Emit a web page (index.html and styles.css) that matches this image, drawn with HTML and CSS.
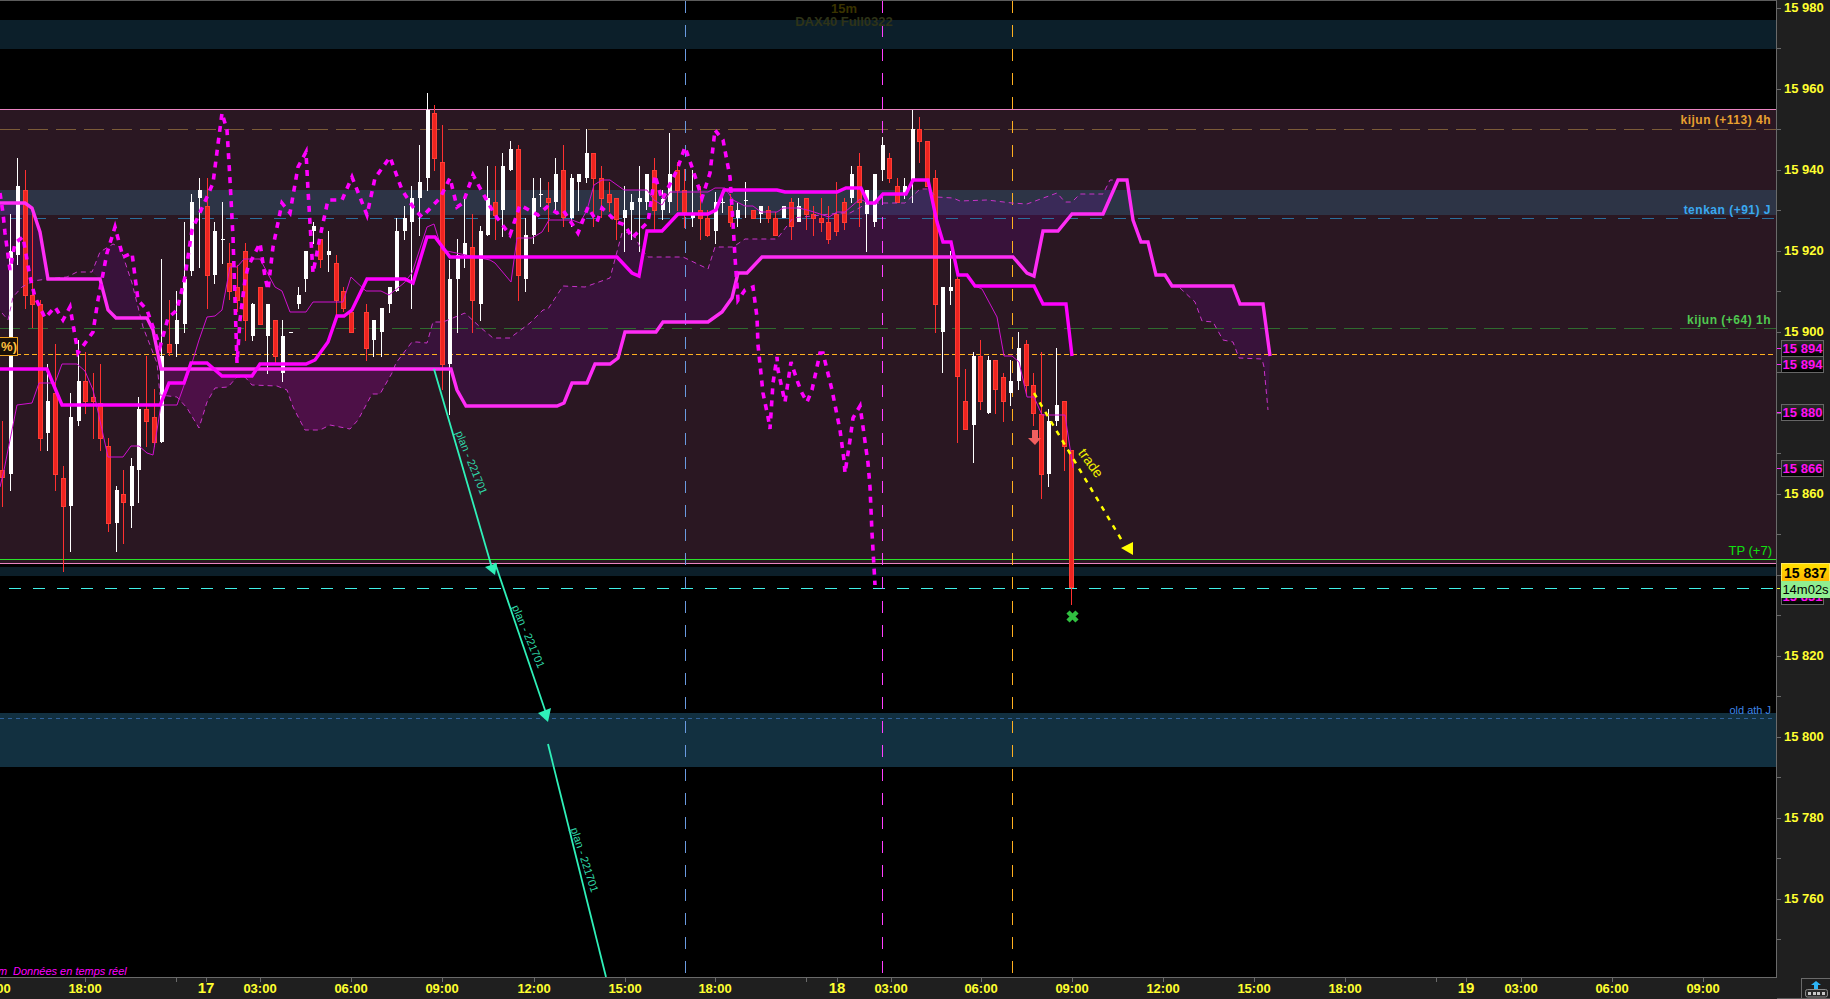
FILE: index.html
```html
<!DOCTYPE html>
<html lang="en">
<head>
    <meta charset="UTF-8">
    <title>DAX40 Full0322 15m</title>
    <link rel="stylesheet" href="styles.css">
</head>
<body>
<div class="terminal">

    <!-- Main chart -->
    <div class="chart">
        <svg class="chart-svg" width="1776" height="976" viewBox="0 1 1776 976">
            <!-- zones -->
            <rect class="zone zone-teal" x="0" y="20" width="1776" height="29"/>
            <rect class="zone zone-plum" x="0" y="109" width="1776" height="455"/>
            <rect class="zone zone-band" x="0" y="190" width="1776" height="25"/>
            <rect class="zone zone-teal" x="0" y="567" width="1776" height="9"/>
            <rect class="zone zone-blue" x="0" y="713" width="1776" height="54"/>

            <!-- kumo -->
            <polygon class="kumo" points="0,203 25,203 32,208 40,232 48,279 33,281 22,287 13,297 8,320 2,313 0,310"/>
            <polygon class="kumo" points="92,272 100,252 113,244 120,247 132,283 143,327 147,318 116,318 108,310 100,279"/>
            <polygon class="kumo-dark" points="161,369 394,369 392,373 380,394 372,394 358,420 350,429 330,425 320,430 305,430 293,407 287,390 277,386 252,385 245,377 237,377 228,387 215,388 207,402 199,428 187,408 177,397 160,395"/>
            <polygon class="kumo" points="394,369 396,363 412,342 417,342 427,343 433,322 443,322 465,313 480,327 493,338 510,338 530,323 543,310 548,309 563,286 585,287 610,278 622,233 633,232 640,247 648,257 683,257 708,269 715,247 733,247 745,239 777,239 793,218 840,213 850,213 868,203 905,203 920,189 928,189 937,197 953,198 960,201 987,200 1012,203 1027,204 1057,193 1065,202 1072,202 1080,194 1103,194 1110,180 1118,180 1103,214 1072,214 1058,231 1043,231 1034,276 1027,273 1013,257 762,257 747,273 738,273 732,298 722,312 708,322 663,322 656,332 625,332 618,358 610,364 595,364 587,383 572,383 564,403 557,406 466,406 457,390 451,369"/>
            <polygon class="kumo" points="1172,286 1233,286 1240,304 1263,304 1270,356 1268,410 1264,367 1262,359 1239,358 1233,342 1223,340 1213,322 1202,321 1195,302 1180,288"/>

            <!-- horizontal levels -->
            <line class="level level-top" x1="0" y1="109.5" x2="1776" y2="109.5"/>
            <line class="level level-kijun4h" x1="0" y1="129.5" x2="1776" y2="129.5"/>
            <line class="level level-tenkan" x1="10" y1="218.5" x2="1776" y2="218.5"/>
            <line class="level level-kijun1h" x1="0" y1="328.5" x2="1776" y2="328.5"/>
            <line class="level level-last" x1="0" y1="354.5" x2="1776" y2="354.5"/>
            <line class="level level-tp" x1="0" y1="559.5" x2="1776" y2="559.5"/>
            <line class="level level-top" x1="0" y1="563.5" x2="1776" y2="563.5"/>
            <line class="level level-cyan" x1="9" y1="588.5" x2="1776" y2="588.5"/>
            <line class="level level-ath" x1="0" y1="718.5" x2="1776" y2="718.5"/>

            <!-- session separators -->
            <line class="vline vline-blue" x1="685.5" y1="1" x2="685.5" y2="977"/>
            <line class="vline vline-magenta" x1="882.5" y1="1" x2="882.5" y2="977"/>
            <line class="vline vline-orange" x1="1012.5" y1="1" x2="1012.5" y2="977"/>

            <!-- symbol -->
            <text class="chart-title title-tf" x="844" y="13">15m</text>
            <text class="chart-title title-sym" x="844" y="26">DAX40 Full0322</text>

            <!-- candles filled by chart.js -->
            <g id="candles"></g>

            <!-- ichimoku -->
            <polyline class="thin" points="0,487 4,470 17,405 32,403 39,383 55,383 62,364 77,364 85,371 93,390 97,407 108,457 123,457 131,446 139,446 147,453 153,455 161,405 177,405 192,363 199,340 207,317 215,316 222,310 230,267 237,267 244,259 260,259 275,287 282,291 290,312 306,312 313,302 343,302 351,277 366,291 381,291 389,295 404,283 412,273 427,227 434,224 442,250 490,260 495,263 511,282 517,238 532,238 542,232 549,220 572,220 580,223 587,210 594,185 602,180 610,180 624,190 647,190 654,200 662,205 670,192 708,192 715,188 725,188 733,200 745,206 753,206 761,212 777,212 783,208 799,208 807,210 814,212 829,217 837,212 845,212 860,199 868,203 875,203 883,194 906,194 913,180 928,180 937,222 943,242 951,242 958,275 967,275 975,286 982,289 997,317 1004,356 1012,356 1019,362 1027,397 1034,397 1042,415 1065,415 1073,468"/>
            <polyline class="span" points="2,313 8,320 13,297 22,287 33,281 47,279 67,277 77,272 92,272 100,252 113,244 120,247 132,283 143,327 157,363 160,395 177,397 187,408 199,428 207,402 215,388 228,387 237,377 245,377 252,385 277,386 287,390 293,407 305,430 320,430 330,425 350,429 358,420 372,394 380,394 392,373 396,363 412,342 417,342 427,343 433,322 443,322 465,313 480,327 493,338 510,338 530,323 543,310 548,309 563,286 585,287 610,278 622,233 633,232 640,247 648,257 683,257 708,269 715,247 733,247 745,239 777,239 793,218 840,213 850,213 868,203 905,203 920,189 928,189 937,197 953,198 960,201 987,200 1012,203 1027,204 1057,193 1065,202 1072,202 1080,194 1103,194 1110,180 1118,180"/>
            <polyline class="span" points="1180,288 1195,302 1202,321 1213,322 1223,340 1233,342 1239,358 1262,359 1264,367 1268,410"/>
            <polyline class="thick thick-b" points="0,203 25,203 32,208 40,232 48,279 100,279 108,310 116,318 147,318 153,330 161,369 451,369 457,390 466,406 557,406 564,403 572,383 587,383 595,364 610,364 618,358 625,332 656,332 663,322 708,322 722,312 732,298 738,273 747,273 762,257 1013,257 1027,273 1034,276 1043,231 1058,231 1072,214 1103,214 1118,180 1127,180 1133,220 1141,242 1148,242 1156,275 1165,275 1172,286 1233,286 1240,304 1263,304 1270,356"/>
            <polyline class="thick" points="0,369 47,369 62,405 160,405 161,403 169,383 184,383 191,363 207,363 222,376 252,376 260,364 306,364 315,360 328,342 337,316 344,316 352,310 367,279 405,279 413,283 427,237 435,237 450,257 617,257 632,273 639,276 647,231 662,231 678,214 708,214 716,210 724,190 777,190 785,192 837,192 846,188 861,188 868,203 875,203 883,194 906,194 913,180 928,180 937,222 943,242 951,242 958,275 967,275 975,286 1034,286 1043,304 1066,304 1072,356"/>
            <polyline class="chikou" points="0,193 3,213 5,233 10,270 15,243 23,237 30,277 35,297 45,318 55,307 63,320 70,307 78,353 93,332 98,300 107,253 115,227 123,257 132,253 138,300 147,310 160,347 168,318 177,310 185,277 192,230 207,197 213,183 222,113 227,130 230,180 233,237 237,363 240,320 245,280 248,267 260,243 265,277 268,290 273,247 282,203 290,213 298,167 306,152 308,190 313,273 320,237 328,200 342,200 352,177 367,215 375,178 390,157 402,190 415,210 422,217 440,198 450,178 457,207 463,203 473,175 480,188 495,215 510,235 520,205 538,215 547,207 557,213 563,210 578,233 588,207 597,222 602,208 617,222 625,225 632,238 648,222 655,175 662,200 677,170 685,147 693,170 702,198 710,173 715,130 723,140 730,177 733,223 735,257 738,300 745,290 753,287 757,317 758,345 763,393 768,417 770,429 773,383 777,357 778,370 783,393 785,402 791,362 798,383 802,393 807,402 812,390 820,353 823,353 832,390 840,430 844,460 845,473 850,440 853,418 860,406 863,427 868,463 870,487 872,533 874,567 875,585"/>

            <!-- plan arrows -->
            <line class="plan" x1="434" y1="369" x2="492" y2="568"/>
            <polygon class="plan-head" points="485,567 497,563 495,575"/>
            <line class="plan" x1="495" y1="563" x2="547" y2="716"/>
            <polygon class="plan-head" points="538,713 551,708 548,722"/>
            <line class="plan" x1="548" y1="744" x2="606" y2="977"/>
            <text class="plan-label" x="468" y="464" transform="rotate(68 468 464)">plan - 221701</text>
            <text class="plan-label" x="525" y="638" transform="rotate(67 525 638)">plan - 221701</text>
            <text class="plan-label" x="581" y="861" transform="rotate(72 581 861)">plan - 221701</text>

            <!-- trade -->
            <line class="trade" x1="1034" y1="393" x2="1124" y2="544"/>
            <polygon class="trade-head" points="1121,548 1133,542 1133,555"/>
            <text class="trade-label" x="1087" y="466" transform="rotate(54 1087 466)">trade</text>
            <path class="sell-mark" d="M1032 430h6v8h3l-6 7-7-7h4z"/>
            <path class="stop-mark" d="M1068 612l9 9M1077 612l-9 9"/>

            <!-- level names -->
            <text class="tag tag-kijun4h" x="1771" y="124">kijun (+113) 4h</text>
            <text class="tag tag-tenkan" x="1771" y="214">tenkan (+91) J</text>
            <text class="tag tag-kijun1h" x="1771" y="324">kijun (+64) 1h</text>
            <text class="tag tag-tp" x="1772" y="555">TP (+7)</text>
            <text class="tag tag-ath" x="1771" y="714">old ath J</text>
            <text class="status" x="13" y="975">Données en temps réel</text>
            <text class="status status-cut" x="-2" y="975">m</text>
        </svg>

        <!-- badge cut off by left edge -->
        <div class="pct-badge">%)</div>
    </div>

    <!-- Price axis -->
    <div class="price-axis">
        <div class="price-row">15 980</div>
        <div class="price-row">15 960</div>
        <div class="price-row">15 940</div>
        <div class="price-row">15 920</div>
        <div class="price-row">15 900</div>
        <div class="price-row">15 880</div>
        <div class="price-row">15 860</div>
        <div class="price-row">15 840</div>
        <div class="price-row">15 820</div>
        <div class="price-row">15 800</div>
        <div class="price-row">15 780</div>
        <div class="price-row">15 760</div>

        <div class="flag flag-a">15 894</div>
        <div class="flag flag-b">15 894</div>
        <div class="flag flag-c">15 880</div>
        <div class="flag flag-d">15 866</div>
        <div class="flag flag-e">15 831</div>
        <div class="flag-bid">15 837</div>
        <div class="flag-timer">14m02s</div>
    </div>

    <!-- Time axis -->
    <svg class="time-axis" id="time-axis" width="1777" height="21"></svg>

    <div class="corner-wrap">
        <div class="corner">
            <svg width="26" height="19" viewBox="0 0 26 19">
                <path class="corner-arrow" d="M14 2l5 4h-3v4h-4V6H9z"/>
                <rect class="corner-kbd" x="3.5" y="10.5" width="22" height="7.5" rx="2"/>
                <rect class="corner-key" x="6" y="13" width="3" height="3"/>
                <rect class="corner-key" x="11" y="13" width="3" height="3"/>
                <rect class="corner-key" x="15" y="13" width="3" height="3"/>
                <rect class="corner-key" x="20" y="13" width="3" height="3"/>
            </svg>
        </div>
    </div>
</div>
<script src="chart.js"></script>
</body>
</html>
```

FILE: styles.css
```css
/* Platform layout */
html, body {
    margin: 0;
    height: 100%;
    background: #1f1f1f;
    overflow: hidden;
}

.terminal {
    display: grid;
    grid-template-columns: 1777px 53px;
    grid-template-rows: 978px 21px;
    font-family: "Liberation Sans", Arial, sans-serif;
}

.chart {
    position: relative;
    background: #000;
    border-top: 1px solid #5c5c5c;
    border-right: 1px solid #6a6a6a;
    border-bottom: 1px solid #6a6a6a;
    overflow: hidden;
}

.chart-svg {
    display: block;
}

.zone { shape-rendering: crispEdges; }
.zone-teal { fill: #0c1f2a; }
.zone-plum { fill: #2a1722; }
.zone-band { fill: #2d3446; }
.zone-blue { fill: #123040; }

.kumo { fill: rgba(120, 0, 170, .18); }
.kumo-dark { fill: rgba(160, 0, 160, .3); }

.level { shape-rendering: crispEdges; stroke-width: 1; }
.level-top { stroke: #ea84c2; }
.level-kijun4h { stroke: #7c5c38; stroke-dasharray: 20 8; }
.level-tenkan { stroke: #2a6f9c; stroke-dasharray: 12 12; }
.level-kijun1h { stroke: #2f6b2f; stroke-dasharray: 20 8; }
.level-last { stroke: #ffb020; stroke-dasharray: 5 3; }
.level-tp { stroke: #2ae02a; }
.level-cyan { stroke: #40f0e8; stroke-dasharray: 12 12; }
.level-ath { stroke: #2f6098; stroke-dasharray: 4 4; }

.vline { stroke-width: 1; stroke-dasharray: 12 12; shape-rendering: crispEdges; }
.vline-blue { stroke: #6a9ae0; }
.vline-magenta { stroke: #ff40ff; }
.vline-orange { stroke: #ffb020; }

.chart-title { text-anchor: middle; font-weight: bold; font-size: 13px; }
.title-tf { fill: #3a3300; }
.title-sym { fill: #2e3318; }

.candle { shape-rendering: crispEdges; }
.wick-w { stroke: #fff; stroke-width: 1; }
.wick-r { stroke: #ff3030; stroke-width: 1; }
.body-w { fill: #fff; }
.body-r { fill: #ee2420; stroke: #ff3c34; stroke-width: 1; }

.thin, .span, .thick, .chikou { fill: none; }
.thin { stroke: #d010d0; stroke-width: 1; }
.span { stroke: #c832c8; stroke-width: 1; stroke-dasharray: 5 4; }
.thick { stroke: #ff00ff; stroke-width: 3.4; }
.thick-b { stroke: #ff2cf6; }
.chikou { stroke: #ff00ff; stroke-width: 3.6; stroke-dasharray: 6 6; }

.plan { stroke: #2ff0b8; stroke-width: 1.8; }
.plan-head { fill: #2ff0b8; }
.plan-label { fill: #2fd8a8; font-size: 11px; text-anchor: middle; }

.trade { stroke: #ffff00; stroke-width: 2.5; stroke-dasharray: 5 6; }
.trade-head { fill: #ffff00; }
.trade-label { fill: #f0f000; font-size: 14px; text-anchor: middle; }
.sell-mark { fill: #f06060; }
.stop-mark { stroke: #30c040; stroke-width: 4.5; fill: none; }

.tag { text-anchor: end; font-size: 12px; font-weight: bold; letter-spacing: .5px; }
.tag-kijun4h { fill: #e8a030; }
.tag-tenkan { fill: #3aa8f0; }
.tag-kijun1h { fill: #50c850; }
.tag-tp { fill: #10e010; font-size: 13px; font-weight: normal; letter-spacing: 0; }
.tag-ath { fill: #3f86e6; font-size: 11px; font-weight: normal; letter-spacing: 0; }

.status { fill: #ff00ff; font-size: 11px; font-style: italic; }

.pct-badge {
    position: absolute;
    left: -10px;
    top: 336px;
    width: 26px;
    height: 17px;
    line-height: 17px;
    text-align: right;
    border: 1px solid #e8a020;
    background: #1a1008;
    color: #ffc040;
    font-size: 13px;
    font-weight: bold;
}

/* Price axis */
.price-axis {
    position: relative;
    height: 978px;
    overflow: hidden;
}

.price-row {
    position: relative;
    height: 81px;
    line-height: 16px;
    padding-left: 7px;
    box-sizing: border-box;
    color: #ffff30;
    font-size: 13px;
    font-weight: bold;
}

.price-row::before, .price-row::after {
    content: "";
    position: absolute;
    left: 0;
    width: 4px;
    height: 1px;
    background: #6a6a6a;
}

.price-row::before { top: 8px; }
.price-row::after { top: 48px; }

.flag, .flag-bid, .flag-timer {
    position: absolute;
    left: 4px;
    font-size: 13px;
    font-weight: bold;
    text-align: center;
    box-sizing: border-box;
}

.flag {
    width: 43px;
    height: 17px;
    line-height: 15px;
    color: #ff10f0;
    background: linear-gradient(#2c2c2c, #000);
    border: 1px solid #666;
}

.flag::before, .flag-timer::before {
    content: "";
    position: absolute;
    left: -5px;
    top: 7px;
    width: 4px;
    height: 1px;
    background: #ff20ff;
}

.flag-a { top: 340px; }
.flag-b { top: 356px; }
.flag-c { top: 404px; }
.flag-d { top: 460px; }
.flag-e { top: 588px; }
.flag-e::before { display: none; }

.flag-bid {
    top: 563px;
    width: 49px;
    height: 19px;
    line-height: 19px;
    color: #000;
    font-size: 14px;
    background: linear-gradient(#ffe000, #ffb400);
    border: 1px solid #ffe860;
}

.flag-timer {
    top: 581px;
    width: 49px;
    height: 17px;
    line-height: 17px;
    color: #000;
    font-size: 13px;
    font-weight: normal;
    background: #90ee90;
}

.flag-timer::before { background: #ffff30; }

/* Time axis */
.time-axis {
    display: block;
}

.time-tick { stroke: #6a6a6a; stroke-width: 1; shape-rendering: crispEdges; }
.time-label { fill: #ffff30; font-size: 13px; font-weight: bold; text-anchor: middle; }
.time-date { font-size: 15px; }

.corner-wrap {
    display: flex;
    justify-content: flex-end;
    border-bottom: 1px solid #5c5c5c;
}

.corner {
    width: 29px;
    height: 20px;
    box-sizing: border-box;
    border-left: 1px solid #6a6a6a;
    border-top: 1px solid #6a6a6a;
}

.corner svg { display: block; }
.corner-arrow { fill: #2db4f5; }
.corner-kbd { fill: #2a2a2a; stroke: #8a8a8a; stroke-width: 1; }
.corner-key { fill: #c8c8c8; }
```

FILE: chart.js
```js
// candles: type, body top, body bottom, wick top, wick bottom (pixels on the chart)
var CANDLES = [
    ['r',470,478,421,507],['w',251,474,214,491],['w',186,255,158,265],['r',190,296,170,309],
    ['r',295,305,213,328],['r',304,439,300,451],['w',401,433,364,451],['r',393,475,344,491],
    ['r',478,507,466,572],['w',417,506,393,552],['w',381,421,340,426],['r',381,402,352,414],
    ['r',397,402,373,439],['r',403,439,364,451],['r',446,524,438,532],['w',490,523,486,552],
    ['r',494,503,470,544],['w',466,506,458,528],['w',409,470,397,503],['r',409,422,356,447],
    ['r',417,443,389,447],['w',356,442,259,443],['r',344,353,300,356],['w',320,344,291,357],
    ['w',279,324,222,333],['w',202,271,194,276],['w',190,198,178,268],['r',206,276,178,309],
    ['w',231,275,222,284],['w',239,240,202,264],['r',263,292,243,300],['r',287,301,265,312],
    ['r',251,321,243,341],['w',304,336,303,341],['r',287,325,287,325],['w',304,336,304,374],
    ['r',320,357,320,363],['w',336,373,320,382],['w',332,333,332,333],['w',295,304,287,309],
    ['w',251,279,251,292],['w',226,231,222,244],['r',239,260,239,268],['w',251,255,231,272],
    ['r',263,301,255,315],['r',291,309,287,312],['r',312,333,312,333],null,
    ['r',312,349,304,361],['w',320,340,320,357],['w',308,332,308,357],['w',287,304,287,313],
    ['w',231,291,218,292],['w',218,231,206,240],['w',198,222,186,309],['w',182,198,145,236],
    ['w',110,178,93,191],['r',113,159,105,171],['r',162,365,125,390],['w',279,364,260,415],
    ['w',255,279,239,333],['w',243,255,197,268],['r',247,301,214,333],['w',231,304,226,321],
    ['w',198,235,166,236],['r',202,216,166,240],['w',166,210,153,237],['w',149,170,141,171],
    ['r',149,276,145,301],['w',235,279,218,292],['w',198,235,178,244],['w',194,195,178,207],
    ['r',198,203,182,232],['w',174,202,158,212],['r',170,218,145,227],['w',178,218,174,227],
    ['w',174,182,174,211],['w',153,178,129,183],['r',153,179,153,227],['r',178,199,166,218],
    ['r',194,203,182,212],['r',198,220,198,240],['w',210,218,186,252],['w',202,210,194,240],
    ['w',198,202,166,252],['w',174,202,174,210],['r',170,211,158,230],['w',199,210,190,220],
    ['w',174,202,133,213],['r',170,191,162,211],['r',190,213,169,228],['w',213,218,170,227],
    ['r',210,219,186,240],['r',218,236,210,237],['w',202,231,192,244],['w',202,203,190,213],
    ['r',206,223,194,227],['w',210,218,203,227],['w',200,200,182,218],['r',210,219,210,219],
    ['w',206,214,206,223],['r',210,219,206,223],['r',218,236,212,236],['w',206,218,206,218],
    ['r',202,227,198,240],['w',206,222,198,222],['r',198,215,198,230],['r',214,219,206,236],
    ['r',218,223,198,232],['r',222,240,206,244],['r',214,232,182,236],['r',202,223,198,230],
    ['w',174,198,166,203],['r',166,203,153,227],['w',190,214,190,252],['w',174,222,174,227],
    ['w',145,170,137,181],['r',158,179,153,183],['r',186,203,178,203],['w',186,194,178,199],
    ['w',129,180,110,203],['r',129,142,117,163],['r',141,187,141,187],['r',178,305,170,333],
    ['w',287,332,287,373],['w',287,291,251,305],['r',279,377,277,443],['r',401,430,369,430],
    ['w',356,425,352,463],['r',356,402,340,410],['w',360,413,356,414],['r',360,390,360,414],
    ['r',377,402,373,422],['w',381,393,360,406],['w',348,381,332,390],['r',344,386,340,395],
    ['r',385,414,373,426],['r',414,475,352,499],['w',421,474,409,487],['w',405,421,348,426],
    ['r',401,447,401,471],['r',450,588,450,605]
];

// x, text, big (date)
var TIMES = [
    [-6,'15:00'],[85,'18:00'],[176,''],[206,'17',true],[260,'03:00'],[351,'06:00'],[442,'09:00'],
    [534,'12:00'],[625,'15:00'],[715,'18:00'],[806,''],[837,'18',true],[891,'03:00'],[981,'06:00'],
    [1072,'09:00'],[1163,'12:00'],[1254,'15:00'],[1345,'18:00'],[1436,''],[1466,'19',true],
    [1521,'03:00'],[1612,'06:00'],[1703,'09:00']
];

var SVG_NS = 'http://www.w3.org/2000/svg';

function make(parent, tag, attrs) {
    var el = document.createElementNS(SVG_NS, tag);
    for (var key in attrs) {
        el.setAttribute(key, attrs[key]);
    }
    parent.appendChild(el);
    return el;
}

function drawCandles() {
    var group = document.getElementById('candles');
    CANDLES.forEach(function (c, i) {
        if (!c) return;
        var x = Math.round(9.5 + 7.583 * (i - 1));
        make(group, 'line', { 'class': 'candle wick-' + c[0], x1: x + .5, x2: x + .5, y1: c[3], y2: c[4] });
        if (c[0] == 'w') {
            make(group, 'rect', { 'class': 'candle body-w', x: x - 1.5, y: c[1], width: 4, height: Math.max(c[2] - c[1], 1) });
        } else {
            make(group, 'rect', { 'class': 'candle body-r', x: x - 1.5, y: c[1] + .5, width: 4, height: c[2] - c[1] - 1 });
        }
    });
}

function drawTimeAxis() {
    var axis = document.getElementById('time-axis');
    TIMES.forEach(function (t) {
        make(axis, 'line', { 'class': 'time-tick', x1: t[0] + .5, x2: t[0] + .5, y1: 0, y2: 4 });
        if (t[1]) {
            var label = make(axis, 'text', { 'class': 'time-label' + (t[2] ? ' time-date' : ''), x: t[0], y: 15 });
            label.textContent = t[1];
        }
    });
}

drawCandles();
drawTimeAxis();
```
